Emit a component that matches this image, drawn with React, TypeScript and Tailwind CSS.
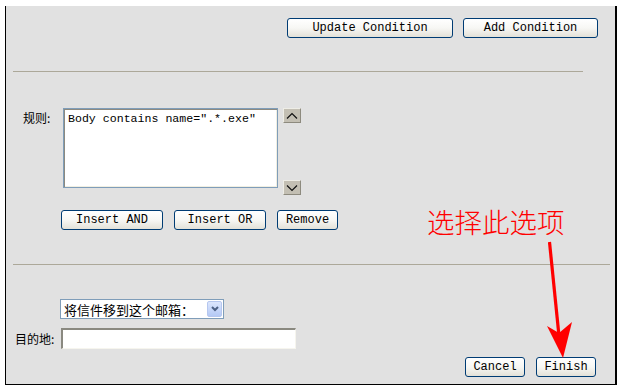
import React from 'react';

const mono = { fontFamily: '"Liberation Mono", "DejaVu Sans Mono", monospace' };
const cjk = { fontFamily: '"Noto Sans CJK SC", "Liberation Sans", sans-serif' };

function XpButton({ label, w }: { label: string; w: string }) {
  return (
    <button
      className={`${w} h-[20px] rounded-[3px] border border-[#003c74] bg-gradient-to-b from-white via-[#f7f7f4] to-[#e3e1d8] text-[12px] leading-none text-black flex items-center justify-center`}
      style={mono}
    >
      {label}
    </button>
  );
}

function ArrowBtn({ up }: { up?: boolean }) {
  return (
    <div className="w-[18px] h-[15px] bg-[#c3bfb3] border-t border-l border-t-[#eeede6] border-l-[#eeede6] border-b border-r border-b-[#8d8a7e] border-r-[#8d8a7e] flex items-center justify-center">
      <svg width="12" height="8" viewBox="0 0 12 8">
        {up ? (
          <path d="M1 6.5 L6 1.5 L11 6.5" fill="none" stroke="#111" strokeWidth="1.2" />
        ) : (
          <path d="M1 1.5 L6 6.5 L11 1.5" fill="none" stroke="#111" strokeWidth="1.2" />
        )}
      </svg>
    </div>
  );
}

export default function App() {
  return (
    <div className="relative w-[621px] h-[389px] bg-white overflow-hidden">
      <div className="ml-[5px] mt-[6px] w-[612px] h-[379px] bg-[#e1e1e1] border-l border-b border-r-2 border-black flex flex-col">
        {/* top actions */}
        <div className="flex justify-end gap-[10px] pt-[12px] pr-[17px]">
          <XpButton label="Update Condition" w="w-[166px]" />
          <XpButton label="Add Condition" w="w-[135px]" />
        </div>

        <div className="mt-[33px] ml-[7px] w-[570px] h-px bg-[#aca899]" />

        {/* rule editor */}
        <div className="flex mt-[36px] pl-[17px]">
          <div className="w-[40px] pt-[3px] text-[12px] leading-[14px] text-black" style={cjk}>
            规则:
          </div>
          <textarea
            readOnly
            defaultValue={'Body contains name=".*.exe"'}
            className="w-[215px] h-[80px] resize-none border border-[#7f9db9] bg-white px-[4px] pt-[3px] text-[11.6px] leading-[14px] text-black outline-none shadow-[inset_1px_1px_0_#8c8a80,inset_-1px_-1px_0_#f1efe2]"
            style={mono}
          />
          <div className="ml-[5px] h-[87px] flex flex-col justify-between">
            <ArrowBtn up />
            <ArrowBtn />
          </div>
        </div>

        <div className="flex mt-[15px] pl-[55px] gap-[11px]">
          <XpButton label="Insert AND" w="w-[102px]" />
          <XpButton label="Insert OR" w="w-[92px]" />
          <XpButton label="Remove" w="w-[61px]" />
        </div>

        <div className="mt-[34px] ml-[7px] w-[597px] h-px bg-[#aca899]" />

        {/* action */}
        <div className="mt-[34px] pl-[54px]">
          <div className="w-[164px] h-[20px] border border-[#7f9db9] bg-white flex items-center justify-between pl-[3px] pr-[1px]">
            <span className="text-[13px] leading-none text-black" style={cjk}>
              将信件移到这个邮箱：
            </span>
            <div className="w-[15px] h-[16px] rounded-[2px] border border-[#b6c7ef] bg-gradient-to-b from-[#dce6fd] to-[#b4c9f5] flex items-center justify-center">
              <svg width="8" height="6" viewBox="0 0 8 6">
                <path d="M1 1 L4 4 L7 1" fill="none" stroke="#4d6185" strokeWidth="2" />
              </svg>
            </div>
          </div>
        </div>

        <div className="flex items-center mt-[9px] pl-[9px]">
          <div className="w-[46px] text-[12px] leading-[14px] text-black" style={cjk}>
            目的地:
          </div>
          <div className="w-[235px] h-[21px] bg-white border-t-2 border-l-2 border-t-[#8a8980] border-l-[#8a8980] border-b border-r border-b-[#f6f5ee] border-r-[#f6f5ee]" />
        </div>

        <div className="flex justify-end gap-[11px] mt-[8px] pr-[19px]">
          <XpButton label="Cancel" w="w-[60px]" />
          <XpButton label="Finish" w="w-[60px]" />
        </div>
      </div>

      {/* annotation */}
      <div
        className="absolute left-[427px] top-[205px] text-[27.5px] leading-[32px] font-light text-[#ff0000]"
        style={cjk}
      >
        选择此选项
      </div>
      <svg className="absolute left-0 top-0 pointer-events-none" width="621" height="389" viewBox="0 0 621 389">
        <line x1="549.5" y1="242" x2="559" y2="336" stroke="#ff0000" strokeWidth="3.2" />
        <path d="M563 358 L547 326 L559 333 L572 322 Z" fill="#ff0000" />
      </svg>
    </div>
  );
}
